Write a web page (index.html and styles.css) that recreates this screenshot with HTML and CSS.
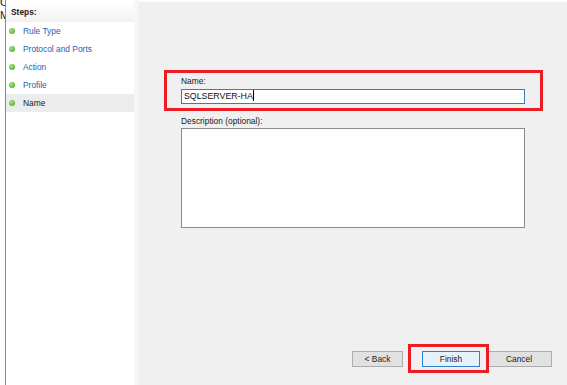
FILE: index.html
```html
<!DOCTYPE html>
<html lang="en">
<head>
    <meta charset="UTF-8">
    <title>New Inbound Rule Wizard - Name</title>
    <link rel="stylesheet" href="styles.css">
</head>
<body>
    <div class="edge">
        <div>C</div>
        <div>M</div>
    </div>

    <div class="steps">
        <div class="steps-head">Steps:</div>
        <ul class="step-list">
            <li class="step"><span class="dot"></span>Rule Type</li>
            <li class="step"><span class="dot"></span>Protocol and Ports</li>
            <li class="step"><span class="dot"></span>Action</li>
            <li class="step"><span class="dot"></span>Profile</li>
            <li class="step current"><span class="dot"></span>Name</li>
        </ul>
    </div>

    <div class="main">
        <div class="field name-field">
            <label class="label">Name:</label>
            <div class="textbox focused">SQLSERVER-HA<span class="caret"></span></div>
        </div>
        <div class="field">
            <label class="label">Description (optional):</label>
            <div class="textarea"></div>
        </div>

        <div class="buttons">
            <button class="btn back">&lt; Back</button>
            <button class="btn finish">Finish</button>
            <button class="btn cancel">Cancel</button>
        </div>

        <!-- annotation boxes -->
        <div class="mark mark-name"></div>
        <div class="mark mark-finish"></div>
    </div>
</body>
</html>
```

FILE: styles.css
```css
body {
    margin: 0;
    height: 385px;
    display: flex;
    background: white;
    font-family: "Liberation Sans", Arial, sans-serif;
    font-size: 8.4px;
    color: #1a1a1a;
    overflow: hidden;
}
.edge {
    width: 5px;
    overflow: hidden;
    border-right: 1px solid #4a97d2;
    font-size: 11px;
    line-height: 13px;
    margin-top: -4px;
    padding-top: 0;
}
.steps {
    width: 128px;
    padding-top: 3px;
    border-right: 4px solid #f7f7f7;
    background: white;
}
.steps-head {
    height: 19px;
    line-height: 18px;
    padding-left: 5px;
    font-weight: bold;
    background: linear-gradient(#ffffff, #f1f1f1);
}
.step-list {
    list-style: none;
    margin: 0;
    padding: 0;
}
.step {
    height: 18px;
    display: flex;
    align-items: center;
    color: #1c62b0;
}
.step.current {
    background: #ececec;
    color: #1a1a1a;
}
.dot {
    width: 6px;
    height: 6px;
    border-radius: 50%;
    margin: 0 8px 0 3px;
    background: radial-gradient(circle at 35% 35%, #a3e684, #3f9e1e);
}
.main {
    flex: 1;
    position: relative;
    display: flex;
    flex-direction: column;
    background: #f0f0f0;
    border-top: 2px solid #fbfbfb;
    padding: 0 42px 18px 43px;
}
.field {
    display: flex;
    flex-direction: column;
}
.name-field {
    margin-top: 73px;
}
.label {
    height: 12px;
    line-height: 12px;
}
.textbox {
    margin-top: 2px;
    height: 13px;
    line-height: 13px;
    padding-left: 2px;
    background: white;
    border: 1px solid #999;
    font-size: 8.8px;
    color: #111;
}
.textbox.focused {
    border-color: #3a7bbf;
}
.caret {
    display: inline-block;
    width: 0;
    height: 11px;
    vertical-align: -2px;
    border-right: 1px solid #000;
}
.field + .field {
    margin-top: 11px;
}
.field + .field .textarea {
    margin-top: 1px;
}
.textarea {
    height: 98px;
    background: white;
    border: 1px solid #8c8c8c;
}
.buttons {
    margin-top: auto;
    display: flex;
    justify-content: flex-end;
    margin-right: -27px;
}
.btn {
    height: 16px;
    padding: 0;
    border: 1px solid #adadad;
    background: #e1e1e1;
    font-family: inherit;
    font-size: 8.4px;
    color: #1a1a1a;
}
.back { width: 51px; margin-right: 19px; }
.finish { width: 58px; background: #e5f1fb; border-color: #2f80cf; }
.cancel { width: 66px; margin-left: 6px; }
.mark {
    position: absolute;
    border: 3px solid #ec1c24;
}
.mark-name {
    left: 26px;
    top: 68px;
    width: 373px;
    height: 35px;
}
.mark-finish {
    left: 270px;
    top: 342px;
    width: 75px;
    height: 23px;
}
```
